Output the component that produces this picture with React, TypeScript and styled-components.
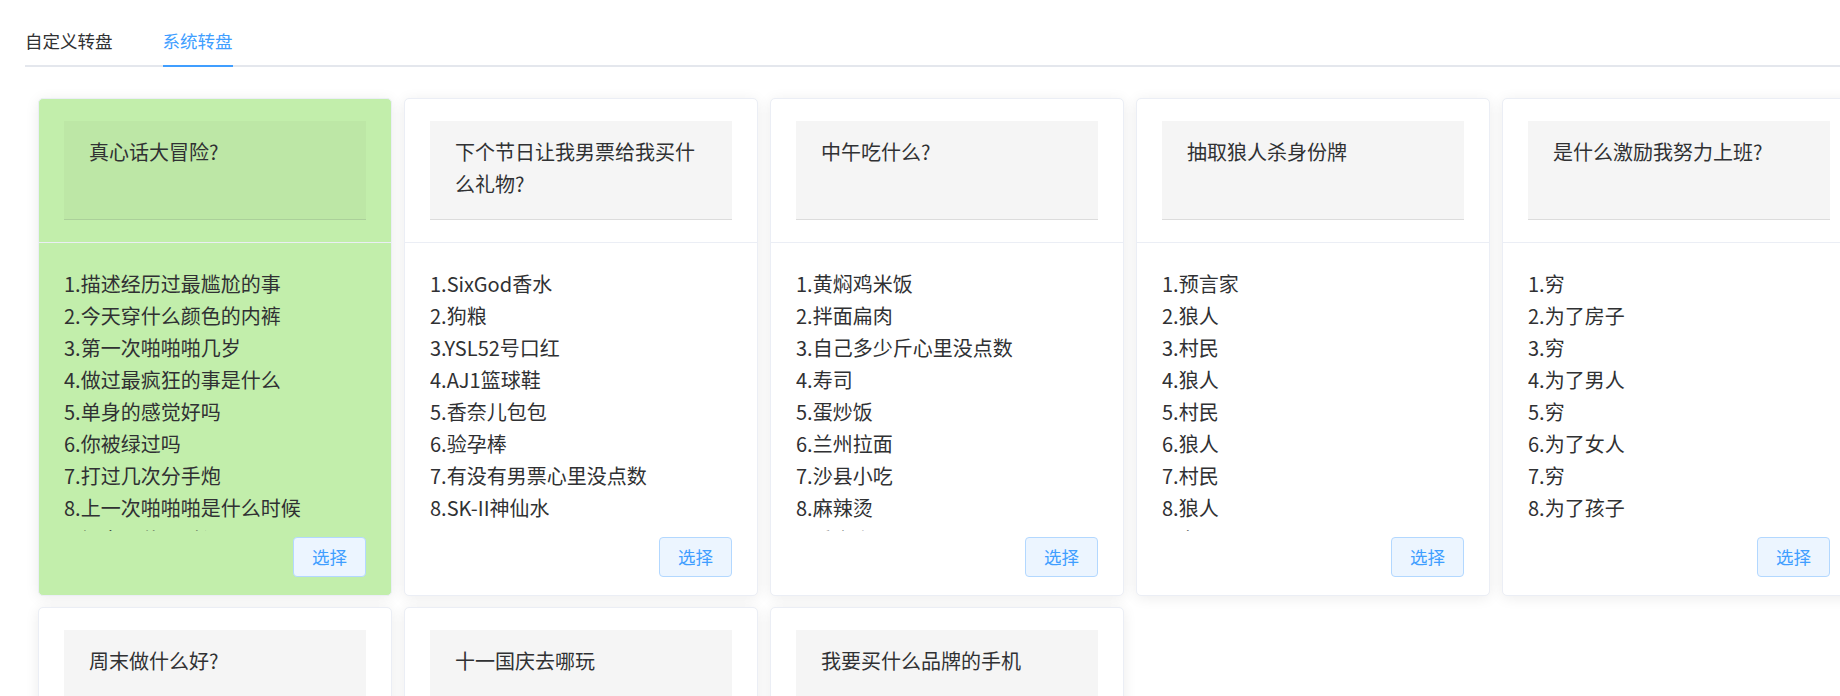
import React from 'react'
import styled, { createGlobalStyle } from 'styled-components'

const GlobalStyle = createGlobalStyle`
  html,
  body {
    margin: 0;
    padding: 0;
    background: #fff;
    overflow: hidden;
  }

  body {
    font-family: "Noto Sans CJK SC", "Liberation Sans", sans-serif;
    color: #303133;
  }

  * {
    box-sizing: border-box;
  }
`

type Wheel = {
  title: string
  items: string[]
}

const WHEELS: Wheel[] = [
  {
    title: '真心话大冒险?',
    items: [
      '描述经历过最尴尬的事',
      '今天穿什么颜色的内裤',
      '第一次啪啪啪几岁',
      '做过最疯狂的事是什么',
      '单身的感觉好吗',
      '你被绿过吗',
      '打过几次分手炮',
      '上一次啪啪啪是什么时候',
      '初恋是什么时候',
    ],
  },
  {
    title: '下个节日让我男票给我买什么礼物?',
    items: [
      'SixGod香水',
      '狗粮',
      'YSL52号口红',
      'AJ1篮球鞋',
      '香奈儿包包',
      '验孕棒',
      '有没有男票心里没点数',
      'SK-II神仙水',
    ],
  },
  {
    title: '中午吃什么?',
    items: [
      '黄焖鸡米饭',
      '拌面扁肉',
      '自己多少斤心里没点数',
      '寿司',
      '蛋炒饭',
      '兰州拉面',
      '沙县小吃',
      '麻辣烫',
      '重庆小面',
    ],
  },
  {
    title: '抽取狼人杀身份牌',
    items: ['预言家', '狼人', '村民', '狼人', '村民', '狼人', '村民', '狼人', '女巫'],
  },
  {
    title: '是什么激励我努力上班?',
    items: ['穷', '为了房子', '穷', '为了男人', '穷', '为了女人', '穷', '为了孩子'],
  },
  {
    title: '周末做什么好?',
    items: ['睡觉', '看电影', '逛街', '打游戏', '爬山', '加班'],
  },
  {
    title: '十一国庆去哪玩',
    items: ['北京', '厦门', '成都', '西安', '在家'],
  },
  {
    title: '我要买什么品牌的手机',
    items: ['苹果', '华为', '小米', 'OPPO', 'vivo'],
  },
]

const Page = styled.div`
  padding: 17px 0 0 25px;
  width: 1840px;
`

const TabNav = styled.div`
  display: flex;
  box-shadow: inset 0 -2px 0 #e4e7ed;
`

const TabItem = styled.div`
  padding: 0 25px;
  cursor: pointer;

  &:first-child {
    padding-left: 0;
  }
`

const TabLabel = styled.span<{ $active?: boolean }>`
  display: inline-block;
  height: 50px;
  line-height: 48px;
  font-size: 17.5px;
  color: ${(p) => (p.$active ? '#409eff' : '#303133')};
  border-bottom: 2px solid ${(p) => (p.$active ? '#409eff' : 'transparent')};
`

const CardGrid = styled.div`
  display: flex;
  flex-wrap: wrap;
  gap: 11px 12px;
  width: 1820px;
  margin: 31px 0 0 13px;
`

const Card = styled.div<{ $selected?: boolean }>`
  width: 354px;
  border: 1px solid #ebeef5;
  border-radius: 5px;
  background: ${(p) => (p.$selected ? '#c2eeab' : '#fff')};
  box-shadow: 0 2px 14px 0 rgba(0, 0, 0, 0.08);
  overflow: hidden;
`

const CardHeader = styled.div`
  padding: 22px 25px;
  border-bottom: 1px solid #ebeef5;
`

const TitleBox = styled.div<{ $selected?: boolean }>`
  height: 99px;
  padding: 15px 25px;
  font-size: 20px;
  line-height: 32px;
  color: #303133;
  background: ${(p) => (p.$selected ? '#bde7a6' : '#f5f5f5')};
  border-bottom: 1px solid ${(p) => (p.$selected ? '#abd09a' : '#dcdcdc')};
  overflow: hidden;
`

const CardBody = styled.div`
  padding: 25px 25px 18px;
`

const ItemList = styled.ul`
  list-style: none;
  margin: 0;
  padding: 0;
  height: 262.5px;
  overflow: hidden;
`

const Item = styled.li`
  font-size: 20px;
  line-height: 32px;
  color: #303133;
  white-space: nowrap;
`

const Footer = styled.div`
  display: flex;
  justify-content: flex-end;
  margin-top: 6.5px;
`

const SelectButton = styled.button`
  height: 40px;
  padding: 0 18px;
  font-family: inherit;
  font-size: 17.5px;
  line-height: 38px;
  color: #409eff;
  background: #ecf5ff;
  border: 1px solid #b3d8ff;
  border-radius: 4px;
  cursor: pointer;
`

const WheelCard = ({ wheel, selected }: { wheel: Wheel; selected?: boolean }) => {
  return (
    <Card $selected={selected}>
      <CardHeader>
        <TitleBox $selected={selected}>{wheel.title}</TitleBox>
      </CardHeader>
      <CardBody>
        <ItemList>
          {wheel.items.map((item, i) => (
            <Item key={i}>
              {i + 1}.{item}
            </Item>
          ))}
        </ItemList>
        <Footer>
          <SelectButton>选择</SelectButton>
        </Footer>
      </CardBody>
    </Card>
  )
}

export default function App() {
  return (
    <>
      <GlobalStyle />
      <Page>
        <TabNav>
          <TabItem>
            <TabLabel>自定义转盘</TabLabel>
          </TabItem>
          <TabItem>
            <TabLabel $active>系统转盘</TabLabel>
          </TabItem>
        </TabNav>
        <CardGrid>
          {WHEELS.map((wheel, i) => (
            <WheelCard key={i} wheel={wheel} selected={i === 0} />
          ))}
        </CardGrid>
      </Page>
    </>
  )
}
